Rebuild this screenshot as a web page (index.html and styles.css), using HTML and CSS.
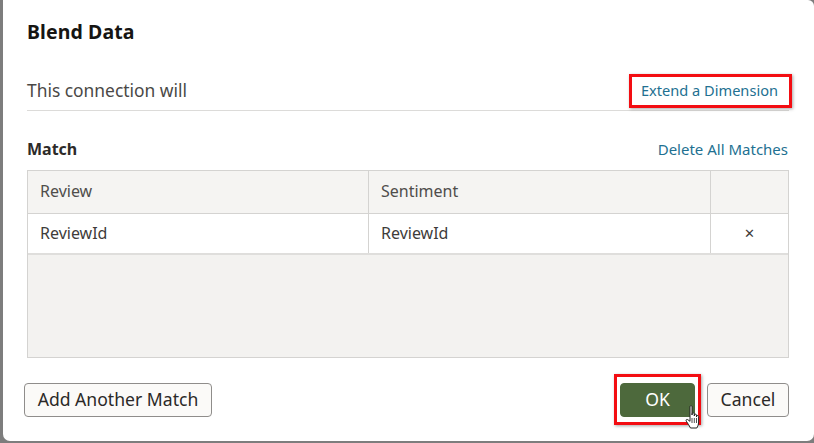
FILE: index.html
```html
<!DOCTYPE html>
<html>
<head>
<meta charset="utf-8">
<link rel="stylesheet" href="styles.css">
</head>
<body>
<div class="dialog">
  <h1 class="title">Blend Data</h1>
  <div class="conn-row">
    <span class="conn-text">This connection will</span>
    <span class="link-wrap">
      <a class="link">Extend a Dimension</a>
      <span class="highlight hl-link"></span>
    </span>
  </div>
  <div class="match-row">
    <span class="match-label">Match</span>
    <a class="link">Delete All Matches</a>
  </div>
  <div class="table">
    <div class="row head">
      <div class="cell c1">Review</div>
      <div class="cell c2">Sentiment</div>
      <div class="cell c3"></div>
    </div>
    <div class="row body">
      <div class="cell c1">ReviewId</div>
      <div class="cell c2">ReviewId</div>
      <div class="cell c3 x">&#x2715;</div>
    </div>
    <div class="empty"></div>
  </div>
  <div class="footer">
    <button class="btn add">Add Another Match</button>
    <div class="right-btns">
      <span class="ok-wrap">
        <button class="btn ok">OK</button>
        <span class="highlight hl-ok"></span>
        <svg class="cursor" width="18" height="26" viewBox="0 0 18 26">
          <path d="M5 1.5 C5 0.6 7 0.6 7 1.5 L7 10 L7.2 8.6 C7.4 7.6 9.2 7.6 9.3 8.8 L9.3 11 L9.5 9.8 C9.7 8.9 11.4 8.9 11.5 10.1 L11.5 12 L11.7 11.1 C11.9 10.2 13.6 10.2 13.6 11.4 L13.6 17 C13.6 20 12.5 21.5 11.8 23 L5.5 23 C4.5 21 2.8 18.5 1.3 16.2 C0.6 15.1 1.6 13.9 2.7 14.6 L5 16.3 Z" fill="#fff" stroke="#222" stroke-width="1"/>
          <path d="M7 13 V18 M9.3 13 V18 M11.5 13 V18" stroke="#222" stroke-width="0.8"/>
        </svg>
      </span>
      <button class="btn cancel">Cancel</button>
    </div>
  </div>
</div>
</body>
</html>
```
FILE: styles.css
```css
html, body {
  margin: 0;
  padding: 0;
}
body {
  background: #7d7d7d;
  width: 814px;
  height: 443px;
  overflow: hidden;
  font-family: "Noto Sans", "Open Sans", sans-serif;
}
.dialog {
  margin-left: 3px;
  width: 811px;
  height: 441px;
  box-sizing: border-box;
  background: #fff;
  border-radius: 0 6px 7px 7px;
  padding: 17px 25px 0 24px;
  display: flex;
  flex-direction: column;
}
.title {
  margin: 0;
  font-size: 19.5px;
  font-weight: 700;
  color: #161513;
  line-height: 30px;
  letter-spacing: 0.1px;
}
.conn-row {
  margin-top: 26px;
  display: flex;
  justify-content: space-between;
  align-items: center;
  border-bottom: 1px solid #dcdbd9;
  height: 34px;
  padding-bottom: 3px;
}
.conn-text {
  font-size: 17.4px;
  color: #4a4846;
}
.link {
  color: #227091;
  font-size: 14.6px;
  cursor: pointer;
}
.link-wrap {
  position: relative;
  margin-right: 11px;
}
.highlight {
  position: absolute;
  border: 3px solid #f30d12;
  box-shadow: 1px 1px 3px rgba(0,0,0,0.35);
  pointer-events: none;
}
.hl-link {
  left: -12px;
  right: -14px;
  top: -5px;
  bottom: -7px;
}
.match-row {
  margin-top: 27px;
  display: flex;
  justify-content: space-between;
  align-items: center;
  height: 22px;
}
.match-label {
  font-size: 16px;
  font-weight: 700;
  color: #2d2b29;
}
.match-row .link {
  margin-right: 1px;
  font-size: 15px;
}
.table {
  margin-top: 10px;
  border: 1px solid #d4d3d1;
  width: 762px;
  box-sizing: border-box;
  display: flex;
  flex-direction: column;
}
.row {
  display: grid;
  grid-template-columns: 341px 342px 1fr;
}
.row.head {
  background: #f5f4f2;
  height: 42px;
  border-bottom: 1px solid #d4d3d1;
}
.row.head .cell {
  padding-bottom: 3px;
}
.row.body {
  background: #fff;
  height: 39px;
  border-bottom: 2px solid #dfdedc;
}
.row.body .cell {
  padding-bottom: 2px;
}
.cell {
  display: flex;
  align-items: center;
  padding-left: 12px;
  font-size: 16px;
  color: #4f4d4b;
}
.row.body .cell {
  color: #3e3c3a;
}
.c1, .c2 {
  border-right: 1px solid #d4d3d1;
}
.x {
  justify-content: center;
  padding-left: 0;
  font-size: 13px;
  color: #333;
}
.empty {
  height: 102px;
  background: #f3f2f0;
}
.footer {
  margin-top: 25px;
  display: flex;
  justify-content: space-between;
  margin-left: -3px;
}
.right-btns {
  display: flex;
  gap: 12px;
}
.btn {
  font-family: "Noto Sans", "Open Sans", sans-serif;
  font-size: 17.6px;
  color: #2b2927;
  background: #fbfaf8;
  border: 1px solid #8f8d8b;
  border-radius: 4px;
  height: 34px;
  padding: 0 13px;
  margin: 0;
  line-height: 1;
  white-space: nowrap;
}
.btn.add {
  width: 188px;
  padding: 0;
}
.ok-wrap {
  position: relative;
  display: flex;
}
.btn.ok {
  width: 75px;
  background: #4d693c;
  border-color: #4d693c;
  color: #fff;
}
.hl-ok {
  left: -6px;
  right: -6px;
  top: -9px;
  bottom: -8px;
}
.cursor {
  position: absolute;
  left: 65px;
  top: 22px;
}
.btn.cancel {
  width: 82px;
  padding: 0;
}
```
